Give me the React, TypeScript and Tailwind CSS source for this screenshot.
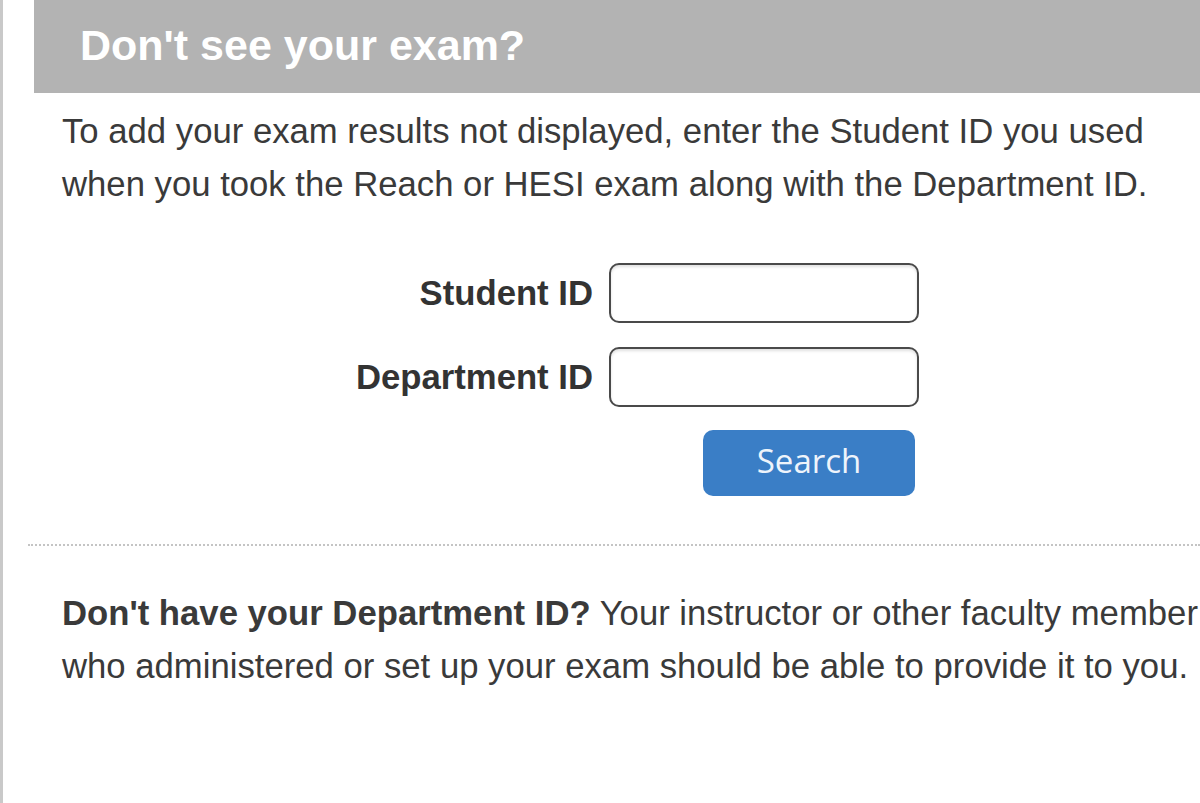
export default function App() {
  return (
    <div className="w-[1200px] h-[803px] overflow-hidden bg-white flex font-['Liberation_Sans',Arial,sans-serif] text-[#3a3a3a]">
      {/* left page edge */}
      <div className="w-[3px] bg-[#c9c9c9] shrink-0" />

      <div className="flex-1 flex flex-col min-w-0">
        {/* Header bar */}
        <div className="ml-[31px] h-[93px] bg-[#b3b3b3] flex items-center pl-[46px] pb-[2px]">
          <h2 className="text-white text-[43px] font-bold leading-none">Don't see your exam?</h2>
        </div>

        {/* Intro */}
        <p className="mt-[12px] ml-[59px] text-[34.7px] leading-[53px] whitespace-nowrap">
          To add your exam results not displayed, enter the Student ID you used
          <br />
          when you took the Reach or HESI exam along with the Department ID.
        </p>

        {/* Form */}
        <div className="mt-[52px] ml-[59px] grid grid-cols-[531px_310px] gap-x-4 gap-y-6 items-center">
          <label className="text-right text-[34.7px] leading-none font-bold text-[#333]">Student ID</label>
          <input className="h-[60px] rounded-[10px] border-2 border-[#4a4a4a] bg-white shadow-[inset_0_2px_3px_rgba(0,0,0,0.12)] outline-none" />
          <label className="text-right text-[34.7px] leading-none font-bold text-[#333]">Department ID</label>
          <input className="h-[60px] rounded-[10px] border-2 border-[#4a4a4a] bg-white shadow-[inset_0_2px_3px_rgba(0,0,0,0.12)] outline-none" />
          <div />
          <div className="flex justify-end pr-[4px] -mt-[1px]">
            <button className="w-[212px] h-[66px] rounded-[10px] bg-[#3a7ec6] text-[#eef4fb] text-[33px] font-['Open_Sans',sans-serif] pb-[4px]">
              Search
            </button>
          </div>
        </div>

        {/* Divider */}
        <div className="mt-[48px] ml-[25px] border-t-2 border-dotted border-[#c4c4c4]" />

        {/* Department help */}
        <p className="mt-[41px] ml-[59px] text-[34.7px] leading-[53px] whitespace-nowrap">
          <span className="font-bold">Don't have your Department ID?</span> Your instructor or other faculty member
          <br />
          who administered or set up your exam should be able to provide it to you.
        </p>
      </div>
    </div>
  );
}
